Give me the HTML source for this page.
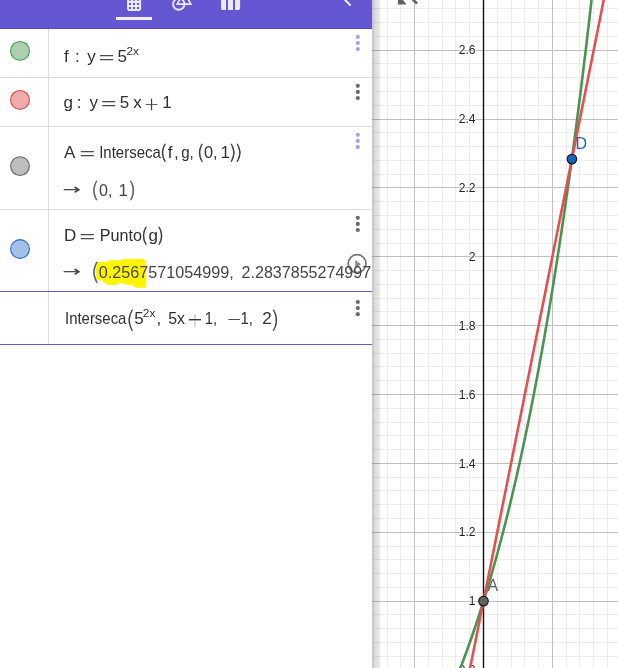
<!DOCTYPE html>
<html><head><meta charset="utf-8"><title>GeoGebra</title>
<style>
html,body{margin:0;padding:0;background:#fff;overflow:hidden}
body{width:618px;height:668px;position:relative;font-family:"Liberation Sans",sans-serif}
svg{position:absolute;left:0;top:0;display:block;will-change:transform;-webkit-font-smoothing:antialiased}
text{font-family:"Liberation Sans",sans-serif}
</style></head><body>
<svg width="618" height="668" viewBox="0 0 618 668">
<defs><linearGradient id="sh" x1="0" x2="1" y1="0" y2="0"><stop offset="0" stop-color="#000" stop-opacity="0.21"/><stop offset="0.14" stop-color="#000" stop-opacity="0.17"/><stop offset="0.32" stop-color="#000" stop-opacity="0.14"/><stop offset="0.6" stop-color="#000" stop-opacity="0.115"/><stop offset="1" stop-color="#000" stop-opacity="0.085"/></linearGradient>
<clipPath id="pc"><rect x="0" y="0" width="372" height="668"/></clipPath></defs>
<g id="graph">
<rect x="372" y="0" width="246" height="668" fill="#fff"/>
<g stroke="#ececec" stroke-width="1" shape-rendering="auto">
<line x1="373.5" y1="0" x2="373.5" y2="668"/><line x1="387.5" y1="0" x2="387.5" y2="668"/><line x1="400.5" y1="0" x2="400.5" y2="668"/><line x1="428.5" y1="0" x2="428.5" y2="668"/><line x1="442.5" y1="0" x2="442.5" y2="668"/><line x1="455.5" y1="0" x2="455.5" y2="668"/><line x1="469.5" y1="0" x2="469.5" y2="668"/><line x1="497.5" y1="0" x2="497.5" y2="668"/><line x1="511.5" y1="0" x2="511.5" y2="668"/><line x1="524.5" y1="0" x2="524.5" y2="668"/><line x1="538.5" y1="0" x2="538.5" y2="668"/><line x1="566.5" y1="0" x2="566.5" y2="668"/><line x1="579.5" y1="0" x2="579.5" y2="668"/><line x1="593.5" y1="0" x2="593.5" y2="668"/><line x1="607.5" y1="0" x2="607.5" y2="668"/><line x1="372" y1="656.5" x2="618" y2="656.5"/><line x1="372" y1="642.5" x2="618" y2="642.5"/><line x1="372" y1="628.5" x2="618" y2="628.5"/><line x1="372" y1="614.5" x2="618" y2="614.5"/><line x1="372" y1="587.5" x2="618" y2="587.5"/><line x1="372" y1="573.5" x2="618" y2="573.5"/><line x1="372" y1="559.5" x2="618" y2="559.5"/><line x1="372" y1="546.5" x2="618" y2="546.5"/><line x1="372" y1="518.5" x2="618" y2="518.5"/><line x1="372" y1="504.5" x2="618" y2="504.5"/><line x1="372" y1="490.5" x2="618" y2="490.5"/><line x1="372" y1="477.5" x2="618" y2="477.5"/><line x1="372" y1="449.5" x2="618" y2="449.5"/><line x1="372" y1="435.5" x2="618" y2="435.5"/><line x1="372" y1="422.5" x2="618" y2="422.5"/><line x1="372" y1="408.5" x2="618" y2="408.5"/><line x1="372" y1="380.5" x2="618" y2="380.5"/><line x1="372" y1="366.5" x2="618" y2="366.5"/><line x1="372" y1="353.5" x2="618" y2="353.5"/><line x1="372" y1="339.5" x2="618" y2="339.5"/><line x1="372" y1="311.5" x2="618" y2="311.5"/><line x1="372" y1="298.5" x2="618" y2="298.5"/><line x1="372" y1="284.5" x2="618" y2="284.5"/><line x1="372" y1="270.5" x2="618" y2="270.5"/><line x1="372" y1="243.5" x2="618" y2="243.5"/><line x1="372" y1="229.5" x2="618" y2="229.5"/><line x1="372" y1="215.5" x2="618" y2="215.5"/><line x1="372" y1="201.5" x2="618" y2="201.5"/><line x1="372" y1="174.5" x2="618" y2="174.5"/><line x1="372" y1="160.5" x2="618" y2="160.5"/><line x1="372" y1="146.5" x2="618" y2="146.5"/><line x1="372" y1="132.5" x2="618" y2="132.5"/><line x1="372" y1="105.5" x2="618" y2="105.5"/><line x1="372" y1="91.5" x2="618" y2="91.5"/><line x1="372" y1="77.5" x2="618" y2="77.5"/><line x1="372" y1="63.5" x2="618" y2="63.5"/><line x1="372" y1="36.5" x2="618" y2="36.5"/><line x1="372" y1="22.5" x2="618" y2="22.5"/><line x1="372" y1="8.5" x2="618" y2="8.5"/></g>
<g stroke="#c0c0c0" stroke-width="1">
<line x1="414.5" y1="0" x2="414.5" y2="668"/><line x1="552.5" y1="0" x2="552.5" y2="668"/><line x1="372" y1="601.5" x2="618" y2="601.5"/><line x1="372" y1="532.5" x2="618" y2="532.5"/><line x1="372" y1="463.5" x2="618" y2="463.5"/><line x1="372" y1="394.5" x2="618" y2="394.5"/><line x1="372" y1="325.5" x2="618" y2="325.5"/><line x1="372" y1="256.5" x2="618" y2="256.5"/><line x1="372" y1="187.5" x2="618" y2="187.5"/><line x1="372" y1="119.5" x2="618" y2="119.5"/><line x1="372" y1="50.5" x2="618" y2="50.5"/></g>
<line x1="483.5" y1="0" x2="483.5" y2="668" stroke="#111" stroke-width="1.4"/>
<g font-size="12" fill="#222" text-anchor="end" stroke="#fff" stroke-width="1.5" stroke-linejoin="round" paint-order="stroke">
<text x="475.5" y="54.4">2.6</text><text x="475.5" y="123.3">2.4</text><text x="475.5" y="192.1">2.2</text><text x="475.5" y="261.0">2</text><text x="475.5" y="329.9">1.8</text><text x="475.5" y="398.7">1.6</text><text x="475.5" y="467.6">1.4</text><text x="475.5" y="536.4">1.2</text><text x="475.5" y="605.3">1</text><text x="475.5" y="674.2">0.8</text></g>
<path d="M442.18,711.42 L443.91,707.62 L445.63,703.76 L447.35,699.84 L449.07,695.86 L450.79,691.81 L452.51,687.70 L454.23,683.51 L455.96,679.27 L457.68,674.95 L459.40,670.56 L461.12,666.10 L462.84,661.57 L464.56,656.96 L466.29,652.28 L468.01,647.53 L469.73,642.70 L471.45,637.78 L473.17,632.79 L474.89,627.72 L476.61,622.57 L478.34,617.33 L480.06,612.01 L481.78,606.60 L483.50,601.10 L485.22,595.51 L486.94,589.84 L488.66,584.07 L490.39,578.21 L492.11,572.25 L493.83,566.19 L495.55,560.04 L497.27,553.79 L498.99,547.44 L500.72,540.98 L502.44,534.42 L504.16,527.75 L505.88,520.97 L507.60,514.09 L509.32,507.09 L511.04,499.98 L512.77,492.75 L514.49,485.41 L516.21,477.94 L517.93,470.36 L519.65,462.65 L521.37,454.82 L523.09,446.86 L524.82,438.77 L526.54,430.55 L528.26,422.20 L529.98,413.71 L531.70,405.08 L533.42,396.32 L535.14,387.41 L536.87,378.35 L538.59,369.15 L540.31,359.81 L542.03,350.30 L543.75,340.65 L545.47,330.84 L547.20,320.87 L548.92,310.73 L550.64,300.44 L552.36,289.97 L554.08,279.34 L555.80,268.53 L557.52,257.55 L559.25,246.39 L560.97,235.05 L562.69,223.52 L564.41,211.81 L566.13,199.91 L567.85,187.81 L569.58,175.52 L571.30,163.03 L573.02,150.34 L574.74,137.44 L576.46,124.33 L578.18,111.01 L579.90,97.47 L581.63,83.71 L583.35,69.73 L585.07,55.52 L586.79,41.09 L588.51,26.41 L590.23,11.50 L591.95,-3.65 L593.68,-19.05 L595.40,-34.69 L597.12,-50.60 L598.84,-66.75 L600.56,-83.18 L602.28,-99.86 L604.01,-116.82 L605.73,-134.06 L607.45,-151.57 L609.17,-169.37 L610.89,-187.46 L612.61,-205.84 L614.33,-224.51 L616.06,-243.50 L617.78,-262.79 L619.50,-282.39 L621.22,-302.31 L622.94,-322.55 L624.66,-343.12 L626.38,-364.03" fill="none" stroke="#4a9350" stroke-width="2.6"/>
<line x1="442.18" y1="807.68" x2="628.11" y2="-121.93" stroke="#de5252" stroke-width="2.6"/>
<circle cx="483.5" cy="601.1" r="4.8" fill="#616161" stroke="#111" stroke-width="1.1"/>
<text x="487.6" y="590.7" font-size="16" fill="#616161">A</text>
<circle cx="571.9" cy="159.1" r="4.8" fill="#1565c0" stroke="#111" stroke-width="1.1"/>
<text x="575.5" y="149" font-size="16" fill="#1565c0">D</text>
<path d="M397.9,-1 L397.9,4.5 L406.6,4.5 L402.2,-1 Z" fill="#616161"/><path d="M412.2,-1.2 L417.1,3.7" stroke="#616161" stroke-width="2.6" fill="none"/>
<rect x="372" y="0" width="8" height="668" fill="url(#sh)"/>
</g>
<g id="panel" clip-path="url(#pc)">
<rect x="0" y="0" width="372.4" height="668" fill="#fff"/>
<rect x="0" y="0" width="372.4" height="29" fill="#6557d2"/><rect x="0" y="28" width="372.4" height="1" fill="#5849cb"/>
<path d="M127,-2 H141.1 V9.1 Q141.1,10.9 139.3,10.9 H128.8 Q127,10.9 127,9.1 Z" fill="#ebe9f9"/>
<rect x="129.0" y="-1.3" width="2" height="2.0" fill="#6557d2"/><rect x="129.0" y="3.0" width="2" height="2.0" fill="#6557d2"/><rect x="129.0" y="7.0" width="2" height="2.0" fill="#6557d2"/><rect x="133.0" y="-1.3" width="2" height="2.0" fill="#6557d2"/><rect x="133.0" y="3.0" width="2" height="2.0" fill="#6557d2"/><rect x="133.0" y="7.0" width="2" height="2.0" fill="#6557d2"/><rect x="137.0" y="-1.3" width="2" height="2.0" fill="#6557d2"/><rect x="137.0" y="3.0" width="2" height="2.0" fill="#6557d2"/><rect x="137.0" y="7.0" width="2" height="2.0" fill="#6557d2"/>
<rect x="116" y="17" width="36" height="3" fill="#f1effb"/>
<circle cx="178.75" cy="4.1" r="5.7" fill="none" stroke="#ebe9f9" stroke-width="1.9"/>
<path d="M184,-8.6 L177.2,4.1 L190.8,4.1 Z" fill="none" stroke="#ebe9f9" stroke-width="1.6" stroke-linejoin="miter"/>
<path d="M221,-2 H226 V9.9 H222.6 Q221,9.9 221,8.3 Z M228,-2 H233 V9.9 H228 Z M235,-2 H240.1 V8.3 Q240.1,9.9 238.5,9.9 H235 Z" fill="#ebe9f9"/>
<path d="M344.9,-0.2 L350.7,5.7" stroke="#fff" stroke-width="1.8" fill="none"/>
<g stroke="#dcdcdc" stroke-width="1">
<line x1="48.5" y1="29" x2="48.5" y2="344"/>
<line x1="0" y1="77.5" x2="372" y2="77.5"/><line x1="0" y1="126.5" x2="372" y2="126.5"/><line x1="0" y1="209.5" x2="372" y2="209.5"/></g>
<g stroke="#6557d2" stroke-width="1">
<line x1="0" y1="291.5" x2="372" y2="291.5"/><line x1="0" y1="344.5" x2="372" y2="344.5"/></g>
<circle cx="20" cy="50.9" r="9.4" fill="#abd0ae" stroke="#4a9a54" stroke-width="1.1"/><circle cx="20" cy="99.9" r="9.4" fill="#efabab" stroke="#d04a4a" stroke-width="1.1"/><circle cx="20" cy="166.1" r="9.4" fill="#bdbdbd" stroke="#666" stroke-width="1.1"/><circle cx="20" cy="249" r="9.4" fill="#a3c0ea" stroke="#2a6fc9" stroke-width="1.1"/>
<circle cx="357.8" cy="36.9" r="2.1" fill="#aaa0e6"/><circle cx="357.8" cy="43.0" r="2.1" fill="#aaa0e6"/><circle cx="357.8" cy="49.1" r="2.1" fill="#aaa0e6"/><circle cx="357.8" cy="85.8" r="2.1" fill="#6b6b6b"/><circle cx="357.8" cy="91.9" r="2.1" fill="#6b6b6b"/><circle cx="357.8" cy="98.0" r="2.1" fill="#6b6b6b"/><circle cx="357.8" cy="134.8" r="2.1" fill="#aaa0e6"/><circle cx="357.8" cy="140.9" r="2.1" fill="#aaa0e6"/><circle cx="357.8" cy="147.0" r="2.1" fill="#aaa0e6"/><circle cx="357.8" cy="217.8" r="2.1" fill="#6b6b6b"/><circle cx="357.8" cy="223.9" r="2.1" fill="#6b6b6b"/><circle cx="357.8" cy="230.0" r="2.1" fill="#6b6b6b"/><circle cx="357.8" cy="302.0" r="2.1" fill="#6b6b6b"/><circle cx="357.8" cy="308.1" r="2.1" fill="#6b6b6b"/><circle cx="357.8" cy="314.2" r="2.1" fill="#6b6b6b"/>
<path d="M96.4,262.6 L107,262.2 L108.4,260.7 L121.9,260.4 L123.9,259.2 L143.7,259.4 L145.6,261.6 L145.9,287.2 L135.7,287.4 L133.3,285 L128.4,284.4 L118.9,282.2 L116.6,284.4 L107.4,284.4 L104.5,282.8 L102.6,280.1 L96.6,279.7 Z" fill="#fdf500" stroke="#fdf500" stroke-width="0.8" stroke-linejoin="round"/>
<text x="64" y="61.9" font-size="17" fill="#303030">f</text><text x="75.0" y="61.9" font-size="17" fill="#303030">:</text><text x="87.2" y="61.9" font-size="17" fill="#303030">y</text><text x="98.8" y="62.5" font-size="16" fill="#4a4a4a" textLength="15.6" lengthAdjust="spacingAndGlyphs">=</text><text x="117.4" y="61.9" font-size="17" fill="#303030">5</text><text x="126.6" y="54.6" font-size="11.5" fill="#303030" textLength="12.4" lengthAdjust="spacingAndGlyphs">2x</text>
<text x="63.6" y="107.9" font-size="17" fill="#303030">g</text><text x="76.8" y="107.9" font-size="17" fill="#303030">:</text><text x="89.4" y="107.9" font-size="17" fill="#303030">y</text><text x="101.0" y="108.5" font-size="16" fill="#4a4a4a" textLength="15.6" lengthAdjust="spacingAndGlyphs">=</text><text x="119.8" y="107.9" font-size="17" fill="#303030">5</text><text x="133.2" y="107.9" font-size="17" fill="#303030">x</text><text x="144.1" y="109.5" font-size="18" fill="#303030" stroke="#303030" stroke-width="0.3" style="font-family:'DejaVu Sans Light','DejaVu Sans',sans-serif">+</text><text x="162.2" y="107.9" font-size="17" fill="#303030">1</text>
<text x="64" y="158.3" font-size="17" fill="#303030">A</text><text x="79.6" y="158.9" font-size="16" fill="#4a4a4a" textLength="15.6" lengthAdjust="spacingAndGlyphs">=</text><text x="99.2" y="158.3" font-size="17" fill="#303030" textLength="61.6" lengthAdjust="spacingAndGlyphs">Interseca</text><text x="160.0" y="159.4" font-size="19.2" fill="#303030" stroke="#303030" stroke-width="0.5" style="font-family:'DejaVu Sans Light','DejaVu Sans',sans-serif">(</text><text x="167.8" y="158.3" font-size="17" fill="#303030">f</text><text x="174" y="158.3" font-size="17" fill="#303030">,</text><text x="181.2" y="158.3" font-size="17" fill="#303030" textLength="12.6" lengthAdjust="spacingAndGlyphs">g,</text><text x="196.9" y="159.4" font-size="19.2" fill="#303030" stroke="#303030" stroke-width="0.5" style="font-family:'DejaVu Sans Light','DejaVu Sans',sans-serif">(</text><text x="204" y="158.3" font-size="17" fill="#303030" textLength="13.6" lengthAdjust="spacingAndGlyphs">0,</text><text x="220.4" y="158.3" font-size="17" fill="#303030">1</text><text x="228.8" y="159.4" font-size="19.2" fill="#303030" stroke="#303030" stroke-width="0.5" style="font-family:'DejaVu Sans Light','DejaVu Sans',sans-serif">)</text><text x="234.8" y="159.4" font-size="19.2" fill="#303030" stroke="#303030" stroke-width="0.5" style="font-family:'DejaVu Sans Light','DejaVu Sans',sans-serif">)</text>
<text x="62.8" y="194.3" font-size="13" fill="#4a4a4a" stroke="#4a4a4a" stroke-width="0.7" textLength="17.4" lengthAdjust="spacingAndGlyphs" style="font-family:'DejaVu Sans Light','DejaVu Sans',sans-serif">→</text><text x="91.2" y="196.7" font-size="20.4" fill="#555" stroke="#555" stroke-width="0.5" style="font-family:'DejaVu Sans Light','DejaVu Sans',sans-serif">(</text><text x="99" y="195.6" font-size="17" fill="#454545" textLength="13.4" lengthAdjust="spacingAndGlyphs">0,</text><text x="118.6" y="195.6" font-size="17" fill="#454545">1</text><text x="128.1" y="196.7" font-size="20.4" fill="#555" stroke="#555" stroke-width="0.5" style="font-family:'DejaVu Sans Light','DejaVu Sans',sans-serif">)</text>
<text x="64" y="240.9" font-size="17" fill="#303030">D</text><text x="79.6" y="241.5" font-size="16" fill="#4a4a4a" textLength="15.6" lengthAdjust="spacingAndGlyphs">=</text><text x="99.8" y="240.9" font-size="17" fill="#303030" textLength="42.2" lengthAdjust="spacingAndGlyphs">Punto</text><text x="141.1" y="242.0" font-size="19.2" fill="#303030" stroke="#303030" stroke-width="0.5" style="font-family:'DejaVu Sans Light','DejaVu Sans',sans-serif">(</text><text x="148.4" y="240.9" font-size="17" fill="#303030">g</text><text x="156.4" y="242.0" font-size="19.2" fill="#303030" stroke="#303030" stroke-width="0.5" style="font-family:'DejaVu Sans Light','DejaVu Sans',sans-serif">)</text>
<circle cx="357.1" cy="263.6" r="8.9" fill="none" stroke="#757575" stroke-width="1.7"/><path d="M355.2,259.9 L360.9,264.2 L355.2,268.5 Z" fill="#8a8a8a"/>
<text x="62.8" y="276.0" font-size="13" fill="#4a4a4a" stroke="#4a4a4a" stroke-width="0.7" textLength="17.4" lengthAdjust="spacingAndGlyphs" style="font-family:'DejaVu Sans Light','DejaVu Sans',sans-serif">→</text><text x="91.0" y="279.6" font-size="22.5" fill="#555" stroke="#555" stroke-width="0.5" style="font-family:'DejaVu Sans Light','DejaVu Sans',sans-serif">(</text><text x="98.8" y="277.9" font-size="17" fill="#454545" textLength="135.0" lengthAdjust="spacingAndGlyphs">0.2567571054999,</text><text x="241.6" y="277.9" font-size="17" fill="#454545" textLength="129.6" lengthAdjust="spacingAndGlyphs">2.2837855274997</text>
<text x="65" y="324.1" font-size="17" fill="#303030" textLength="61.4" lengthAdjust="spacingAndGlyphs">Interseca</text><text x="126.2" y="327.5" font-size="22.5" fill="#303030" stroke="#303030" stroke-width="0.3" style="font-family:'DejaVu Sans Light','DejaVu Sans',sans-serif">(</text><text x="134.2" y="324.1" font-size="17" fill="#303030">5</text><text x="142.8" y="316.8" font-size="11.5" fill="#303030" textLength="12.6" lengthAdjust="spacingAndGlyphs">2x</text><text x="156.4" y="324.1" font-size="17" fill="#303030">,</text><text x="168.2" y="324.1" font-size="17" fill="#303030" textLength="16.8" lengthAdjust="spacingAndGlyphs">5x</text><text x="186.7" y="326.7" font-size="19.5" fill="#c4c4c4" stroke="#c4c4c4" stroke-width="0.3" style="font-family:'DejaVu Sans Light','DejaVu Sans',sans-serif">+</text><path d="M188.8,319.6 H201" stroke="#303030" stroke-width="1.1"/><text x="204.8" y="324.1" font-size="17" fill="#303030" textLength="12.4" lengthAdjust="spacingAndGlyphs">1,</text><text x="226.7" y="325.2" font-size="17.4" fill="#303030" stroke="#303030" stroke-width="0.3" style="font-family:'DejaVu Sans Light','DejaVu Sans',sans-serif">−</text><text x="240.4" y="324.1" font-size="17" fill="#303030" textLength="12.4" lengthAdjust="spacingAndGlyphs">1,</text><text x="262.2" y="324.1" font-size="17" fill="#303030">2</text><text x="270.4" y="327.5" font-size="22.5" fill="#303030" stroke="#303030" stroke-width="0.3" style="font-family:'DejaVu Sans Light','DejaVu Sans',sans-serif">)</text>
</g>
</svg>
</body></html>
